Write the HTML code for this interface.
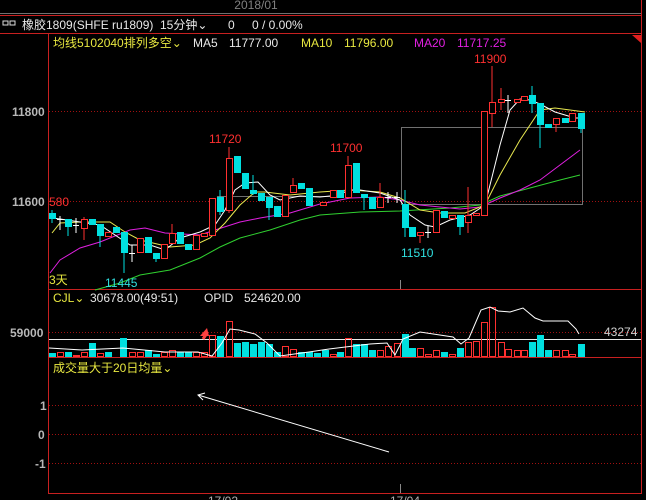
<!DOCTYPE html>
<html><head><meta charset="utf-8"><style>
html,body{margin:0;padding:0;background:#000;width:646px;height:500px;overflow:hidden}
svg{display:block}
text{font-family:"Liberation Sans","Noto Sans CJK SC",sans-serif;font-size:12px}
</style></head><body>
<svg width="646" height="500" viewBox="0 0 646 500" xmlns="http://www.w3.org/2000/svg">
<rect width="646" height="500" fill="#000"/>
<text x="256" y="9" fill="#808080" text-anchor="middle" font-size="11">2018/01</text>
<line x1="0" y1="13.5" x2="641" y2="13.5" stroke="#707070"/>
<line x1="0" y1="15.5" x2="641" y2="15.5" stroke="#c82020"/>
<line x1="0" y1="33.5" x2="641" y2="33.5" stroke="#c82020"/>
<line x1="641.5" y1="0" x2="641.5" y2="494" stroke="#c82020"/>
<line x1="48.5" y1="33" x2="48.5" y2="494" stroke="#c82020"/>
<line x1="48" y1="289.5" x2="641" y2="289.5" stroke="#c82020"/>
<line x1="48" y1="357.5" x2="641" y2="357.5" stroke="#c82020"/>
<line x1="48" y1="493.5" x2="641" y2="493.5" stroke="#c82020"/>
<polygon points="632,35 641,35 641,43" fill="#e02020"/>
<!-- title -->
<rect x="3" y="21" width="5" height="4" fill="none" stroke="#ddd"/><rect x="10" y="21" width="5" height="4" fill="none" stroke="#ddd"/>
<text x="22" y="29" fill="#e8e8e8">橡胶1809(SHFE ru1809)</text>
<text x="160" y="29" fill="#e8e8e8">15分钟⌄</text>
<text x="228" y="29" fill="#e8e8e8">0</text>
<text x="252" y="29" fill="#e8e8e8">0 / 0.00%</text>
<text x="53" y="47" fill="#e8e840">均线5102040排列多空⌄</text>
<text x="193" y="47" fill="#e8e8e8">MA5</text>
<text x="229" y="47" fill="#e8e8e8">11777.00</text>
<text x="301" y="47" fill="#e8e840">MA10</text>
<text x="344" y="47" fill="#e8e840">11796.00</text>
<text x="414" y="47" fill="#e020e0">MA20</text>
<text x="457" y="47" fill="#e020e0">11717.25</text>
<!-- grid -->
<g stroke="#a01010" stroke-dasharray="1,2">
<line x1="49" y1="111.5" x2="641" y2="111.5"/>
<line x1="49" y1="201.5" x2="641" y2="201.5"/>
<line x1="49" y1="332.5" x2="641" y2="332.5"/>
<line x1="49" y1="405.5" x2="641" y2="405.5"/>
<line x1="49" y1="434.5" x2="641" y2="434.5"/>
<line x1="49" y1="463.5" x2="641" y2="463.5"/>
</g>
<g fill="#b8b8b8" font-weight="bold">
<text x="12" y="116">11800</text><text x="12" y="206">11600</text>
<text x="10" y="337">59000</text>
<text x="40" y="410">1</text><text x="38" y="439">0</text><text x="35" y="468">-1</text>
</g>
<text x="49" y="206" fill="#ff3030">580</text>
<line x1="400.5" y1="280" x2="400.5" y2="289" stroke="#888"/>
<line x1="400.5" y1="484" x2="400.5" y2="493" stroke="#888"/>
<rect x="401.5" y="127.5" width="181" height="77" fill="none" stroke="#707070"/>
<line x1="217" y1="196.5" x2="330" y2="196.5" stroke="#707070"/>
<!-- MAs -->
<g fill="none" stroke-width="1">
<polyline stroke="#30d030" points="95,290 120,283 140,275 170,270 200,258 220,247 240,238 270,230 300,220 320,215 360,212 400,211 450,208 480,205 500,196 530,188 560,180 580,175"/>
<polyline stroke="#e020e0" points="50,273 60,260 80,248 100,242 130,230 145,228 165,233 200,235 215,230 240,222 260,218 290,213 320,204 350,198 380,197 400,200 420,205 460,209 480,207 500,198 520,190 540,180 560,165 580,150"/>
<polyline stroke="#e8e850" points="52,233 60,223 80,222 110,222 125,232 140,240 170,247 195,245 210,238 225,223 240,205 255,192 265,192 290,195 320,192 350,190 380,192 400,198 420,210 440,213 465,213 485,205 500,175 520,140 540,110 555,108 585,112"/>
<polyline stroke="#ffffff" points="52,218 60,219 100,225 130,245 150,245 165,250 180,238 200,232 215,225 225,210 235,190 245,183 258,182 270,195 280,200 300,196 320,197 340,195 348,190 360,190 380,193 400,200 410,215 425,225 435,227 450,220 470,215 485,205 500,145 510,110 520,99 530,100 540,104 555,112 575,118 585,118"/>
</g>
<!-- candles: cyan -->
<g fill="#00e0e0" stroke="#00e0e0">
<line x1="52" y1="210" x2="52" y2="223"/><rect x="49.5" y="213.5" width="6" height="5"/>
<line x1="68" y1="219" x2="68" y2="236"/><rect x="65.5" y="219.5" width="6" height="7"/>
<rect x="89.5" y="219.5" width="6" height="5"/>
<line x1="100" y1="224" x2="100" y2="247"/><rect x="97.5" y="224.5" width="6" height="11"/>
<rect x="113.5" y="227.5" width="6" height="5"/>
<line x1="124" y1="232" x2="124" y2="273"/><rect x="121.5" y="232.5" width="6" height="20"/>
<rect x="145.5" y="237.5" width="6" height="15"/>
<line x1="156" y1="253" x2="156" y2="262"/><rect x="153.5" y="253.5" width="6" height="5"/>
<rect x="177.5" y="232.5" width="6" height="11"/>
<rect x="185.5" y="244.5" width="6" height="5"/>
<line x1="220" y1="190" x2="220" y2="215"/><rect x="217.5" y="197.5" width="6" height="14"/>
<rect x="234.5" y="156.5" width="6" height="16"/>
<rect x="242.5" y="173.5" width="6" height="15"/>
<line x1="253" y1="175" x2="253" y2="195"/><rect x="250.5" y="190.5" width="6" height="3"/>
<rect x="258.5" y="193.5" width="6" height="7"/>
<line x1="269" y1="197" x2="269" y2="220"/><rect x="266.5" y="197.5" width="6" height="10"/>
<rect x="274.5" y="206.5" width="6" height="10"/>
<rect x="298.5" y="183.5" width="6" height="5"/>
<rect x="306.5" y="188.5" width="6" height="17"/>
<rect x="337.5" y="190.5" width="6" height="7"/>
<rect x="353.5" y="163.5" width="6" height="29"/>
<line x1="364" y1="194" x2="364" y2="210"/><rect x="361.5" y="194.5" width="6" height="3"/>
<rect x="369.5" y="197.5" width="6" height="11"/>
<line x1="405" y1="190" x2="405" y2="237"/><rect x="402.5" y="204.5" width="6" height="23"/>
<rect x="409.5" y="227.5" width="6" height="9"/>
<rect x="441.5" y="211.5" width="6" height="6"/>
<line x1="460" y1="215" x2="460" y2="235"/><rect x="457.5" y="215.5" width="6" height="11"/>
<line x1="532" y1="86" x2="532" y2="113"/><rect x="529.5" y="95.5" width="6" height="8"/>
<line x1="540" y1="103" x2="540" y2="148"/><rect x="537.5" y="103.5" width="6" height="21"/>
<rect x="545.5" y="124.5" width="6" height="3"/>
<rect x="562.5" y="118.5" width="6" height="4"/>
<line x1="581" y1="113" x2="581" y2="133"/><rect x="578.5" y="113.5" width="6" height="15"/>
</g>
<!-- candles: red hollow -->
<g fill="none" stroke="#ff3030">
<line x1="84" y1="217" x2="84" y2="240"/><rect x="81.5" y="219.5" width="6" height="9" fill="#000"/>
<rect x="105.5" y="232.5" width="6" height="4" fill="#000"/>
<rect x="137.5" y="238.5" width="6" height="14" fill="#000"/>
<rect x="161.5" y="244.5" width="6" height="14" fill="#000"/>
<line x1="172" y1="224" x2="172" y2="243"/><rect x="169.5" y="233.5" width="6" height="10" fill="#000"/>
<rect x="193.5" y="235.5" width="6" height="14" fill="#000"/>
<rect x="201.5" y="233.5" width="6" height="3" fill="#000"/>
<rect x="209.5" y="198.5" width="6" height="37" fill="#000"/>
<line x1="229" y1="147" x2="229" y2="213"/><rect x="226.5" y="158.5" width="6" height="52" fill="#000"/>
<rect x="282.5" y="195.5" width="6" height="21" fill="#000"/>
<line x1="293" y1="178" x2="293" y2="192"/><rect x="290.5" y="185.5" width="6" height="7" fill="#000"/>
<rect x="320.5" y="202.5" width="6" height="3" fill="#000"/>
<rect x="330.5" y="190.5" width="6" height="7" fill="#000"/>
<line x1="348" y1="156" x2="348" y2="197"/><rect x="345.5" y="165.5" width="6" height="32" fill="#000"/>
<line x1="380" y1="183" x2="380" y2="207"/><rect x="377.5" y="197.5" width="6" height="10" fill="#000"/>
<line x1="420" y1="232" x2="420" y2="243"/><rect x="417.5" y="232.5" width="6" height="3" fill="#000"/>
<rect x="433.5" y="210.5" width="6" height="22" fill="#000"/>
<rect x="449.5" y="215.5" width="6" height="3" fill="#000"/>
<line x1="468" y1="187" x2="468" y2="233"/><rect x="465.5" y="215.5" width="6" height="7" fill="#000"/>
<rect x="473.5" y="213.5" width="6" height="2" fill="#000"/>
<rect x="481.5" y="111.5" width="6" height="104" fill="#000"/>
<line x1="492" y1="66" x2="492" y2="127"/><rect x="489.5" y="102.5" width="6" height="11" fill="#000"/>
<line x1="501" y1="88" x2="501" y2="110"/><rect x="498.5" y="99.5" width="6" height="3" fill="#000"/>
<rect x="514.5" y="99.5" width="6" height="3" fill="#000"/>
<rect x="521.5" y="96.5" width="6" height="4" fill="#000"/>
<line x1="556" y1="118" x2="556" y2="132"/><rect x="553.5" y="118.5" width="6" height="6" fill="#000"/>
<rect x="569.5" y="113.5" width="6" height="8" fill="#000"/>
</g>
<!-- crosses -->
<g stroke="#fff">
<line x1="60" y1="216" x2="60" y2="230"/><line x1="57" y1="219.5" x2="63" y2="219.5"/>
<line x1="76" y1="218" x2="76" y2="233"/><line x1="73" y1="225.5" x2="79" y2="225.5"/>
<line x1="132" y1="245" x2="132" y2="262"/><line x1="129" y1="253.5" x2="135" y2="253.5"/>
<line x1="388" y1="192" x2="388" y2="203"/><line x1="385" y1="197.5" x2="391" y2="197.5"/>
<line x1="397" y1="192" x2="397" y2="203"/><line x1="394" y1="197.5" x2="400" y2="197.5"/>
<line x1="428" y1="226" x2="428" y2="238"/><line x1="425" y1="232.5" x2="431" y2="232.5"/>
<line x1="508" y1="95" x2="508" y2="113"/><line x1="505" y1="100.5" x2="511" y2="100.5"/>
</g>
<text x="209" y="143" fill="#ff3030">11720</text>
<text x="330" y="152" fill="#ff3030">11700</text>
<text x="474" y="63" fill="#ff3030">11900</text>
<text x="401" y="257" fill="#30e0e0">11510</text>
<text x="105" y="287" fill="#30e0e0">11445</text>
<text x="49" y="284" fill="#e8e840">3天</text>
<!-- volume panel -->
<text x="53" y="302" fill="#e8e840">CJL⌄</text>
<text x="90" y="302" fill="#e8e8e8">30678.00(49:51)</text>
<text x="204" y="302" fill="#e8e8e8">OPID</text>
<text x="244" y="302" fill="#e8e8e8">524620.00</text>
<text x="604" y="336" fill="#d0d0d0">43274</text>
<line x1="49" y1="339.5" x2="641" y2="339.5" stroke="#e8e8e8"/>
<g fill="#00e0e0">
<rect x="49" y="353" width="7" height="4"/><rect x="65" y="352" width="7" height="5"/><rect x="89" y="343" width="7" height="14"/><rect x="105" y="352" width="7" height="5"/><rect x="120" y="338" width="7" height="19"/><rect x="145" y="350" width="7" height="7"/><rect x="153" y="354" width="7" height="3"/><rect x="177" y="352" width="7" height="5"/><rect x="185" y="352" width="7" height="5"/><rect x="217" y="336" width="7" height="21"/><rect x="234" y="343" width="7" height="14"/><rect x="242" y="342" width="7" height="15"/><rect x="250" y="344" width="7" height="13"/><rect x="258" y="342" width="7" height="15"/><rect x="266" y="344" width="7" height="13"/><rect x="274" y="352" width="7" height="5"/><rect x="298" y="352" width="7" height="5"/><rect x="306" y="352" width="7" height="5"/><rect x="314" y="353" width="7" height="4"/><rect x="322" y="350" width="7" height="7"/><rect x="337" y="352" width="7" height="5"/><rect x="353" y="344" width="7" height="13"/><rect x="361" y="344" width="7" height="13"/><rect x="369" y="350" width="7" height="7"/><rect x="402" y="334" width="7" height="23"/><rect x="409" y="348" width="7" height="9"/><rect x="441" y="352" width="7" height="5"/><rect x="457" y="348" width="7" height="9"/><rect x="529" y="342" width="7" height="15"/><rect x="537" y="335" width="7" height="22"/><rect x="545" y="350" width="7" height="7"/><rect x="578" y="344" width="7" height="13"/>
</g>
<g fill="none" stroke="#ff3030">
<rect x="57.5" y="352.5" width="6" height="4"/><rect x="73.5" y="355.5" width="6" height="1"/><rect x="81.5" y="352.5" width="6" height="4"/><rect x="97.5" y="353.5" width="6" height="3"/><rect x="129.5" y="352.5" width="6" height="4"/><rect x="137.5" y="352.5" width="6" height="4"/><rect x="161.5" y="352.5" width="6" height="4"/><rect x="169.5" y="350.5" width="6" height="6"/><rect x="193.5" y="352.5" width="6" height="4"/><rect x="201.5" y="352.5" width="6" height="4"/><rect x="209.5" y="335.5" width="6" height="21"/><rect x="226.5" y="321.5" width="6" height="35"/><rect x="282.5" y="346.5" width="6" height="10"/><rect x="290.5" y="349.5" width="6" height="7"/><rect x="330.5" y="354.5" width="6" height="2"/><rect x="345.5" y="338.5" width="6" height="18"/><rect x="377.5" y="350.5" width="6" height="6"/><rect x="385.5" y="346.5" width="6" height="10"/><rect x="394.5" y="343.5" width="6" height="13"/><rect x="417.5" y="348.5" width="6" height="8"/><rect x="425.5" y="354.5" width="6" height="2"/><rect x="433.5" y="350.5" width="6" height="6"/><rect x="449.5" y="354.5" width="6" height="2"/><rect x="465.5" y="342.5" width="6" height="14"/><rect x="473.5" y="341.5" width="6" height="15"/><rect x="481.5" y="322.5" width="6" height="34"/><rect x="489.5" y="307.5" width="6" height="49"/><rect x="498.5" y="342.5" width="6" height="14"/><rect x="505.5" y="349.5" width="6" height="7"/><rect x="514.5" y="350.5" width="6" height="6"/><rect x="521.5" y="350.5" width="6" height="6"/><rect x="553.5" y="350.5" width="6" height="6"/><rect x="562.5" y="350.5" width="6" height="6"/><rect x="569.5" y="354.5" width="6" height="2"/>
</g>
<polyline fill="none" stroke="#fff" points="49,348 82,350 123,348 165,352 198,352 212,356 222,343 230,329 239,330 255,334 267,343 280,356 309,352 329,349 370,344 387,343 395,355 403,339 420,332 453,337 461,344 469,338 481,310 490,307 498,311 510,312 523,308 535,318 543,321 568,321 576,329 579,334"/>
<polygon points="200,336 207,328 209,336" fill="#ff4040"/>
<line x1="203" y1="339" x2="207" y2="333" stroke="#ff4040" stroke-width="3"/>
<!-- bottom panel -->
<text x="53" y="372" fill="#e8e840">成交量大于20日均量⌄</text>
<line x1="389" y1="452" x2="198" y2="395" stroke="#fff"/>
<polyline fill="none" stroke="#fff" points="205,393 198,395 203,400"/>
<text x="208" y="505" fill="#b0b0b0">17/02</text>
<text x="390" y="505" fill="#b0b0b0">17/04</text>
</svg>
</body></html>
